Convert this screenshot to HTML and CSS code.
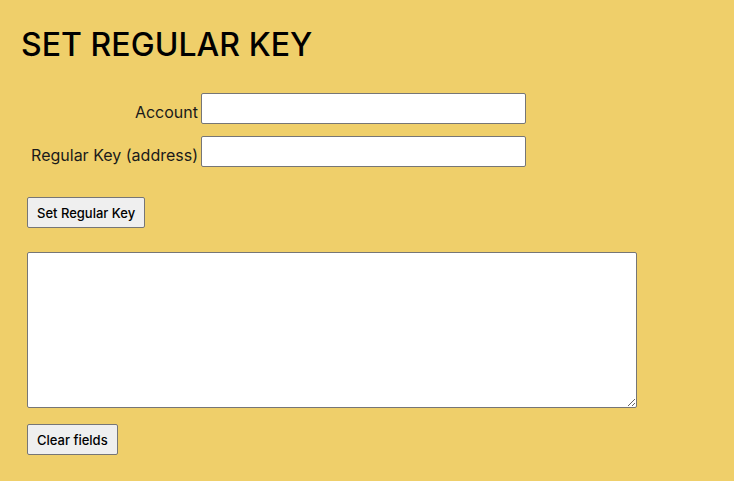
FILE: index.html
```html
<!DOCTYPE html>
<html>
<head>
<meta charset="utf-8">
<link rel="stylesheet" href="styles.css">
</head>
<body>
<main class="page">
  <h1 class="title">SET REGULAR KEY</h1>
  <div class="form-grid">
    <label class="label" for="account">Account</label>
    <input class="field" id="account" type="text">
    <label class="label" for="regkey">Regular Key (address)</label>
    <input class="field" id="regkey" type="text">
  </div>
  <div class="actions">
    <button class="btn" type="button">Set Regular Key</button>
  </div>
  <textarea class="results"></textarea>
  <div class="actions bottom">
    <button class="btn" type="button">Clear fields</button>
  </div>
</main>
</body>
</html>
```
FILE: styles.css
```css
html, body {
  margin: 0;
  padding: 0;
  background: #efcf6a;
}
body {
  font-family: Inter, "DejaVu Sans", sans-serif;
  color: #111;
}
.page {
  padding: 0 0 0 27px;
}
.title {
  margin: 0;
  padding-top: 26px;
  margin-left: -6px;
  font-family: Inter, sans-serif;
  font-weight: 500;
  font-size: 32px;
  line-height: 38px;
  letter-spacing: 0.05px;
  color: #000;
}
.form-grid {
  display: grid;
  grid-template-columns: 174px 325px;
  column-gap: 0;
  row-gap: 12px;
  margin-top: 29px;
  align-items: center;
}
.label {
  font-size: 16px;
  text-align: right;
  padding-right: 3px;
  padding-top: 7px;
  justify-self: end;
  white-space: nowrap;
  color: #1a1a1a;
}
.field {
  box-sizing: border-box;
  width: 325px;
  height: 31px;
  margin: 0;
  border: 1px solid #767676;
  border-radius: 2px;
  background: #fff;
}
.actions {
  margin-top: 30px;
}
.btn {
  box-sizing: border-box;
  height: 31px;
  padding: 0 9px;
  font-family: Inter, sans-serif;
  font-size: 13px;
  font-weight: 500;
  color: #000;
  background: #efefef;
  border: 1px solid #767676;
  border-radius: 2px;
}
.results {
  display: block;
  box-sizing: border-box;
  width: 610px;
  height: 156px;
  margin: 24px 0 0 0;
  border: 1px solid #767676;
  border-radius: 2px;
  background: #fff;
}
.bottom {
  margin-top: 16px;
}
```
